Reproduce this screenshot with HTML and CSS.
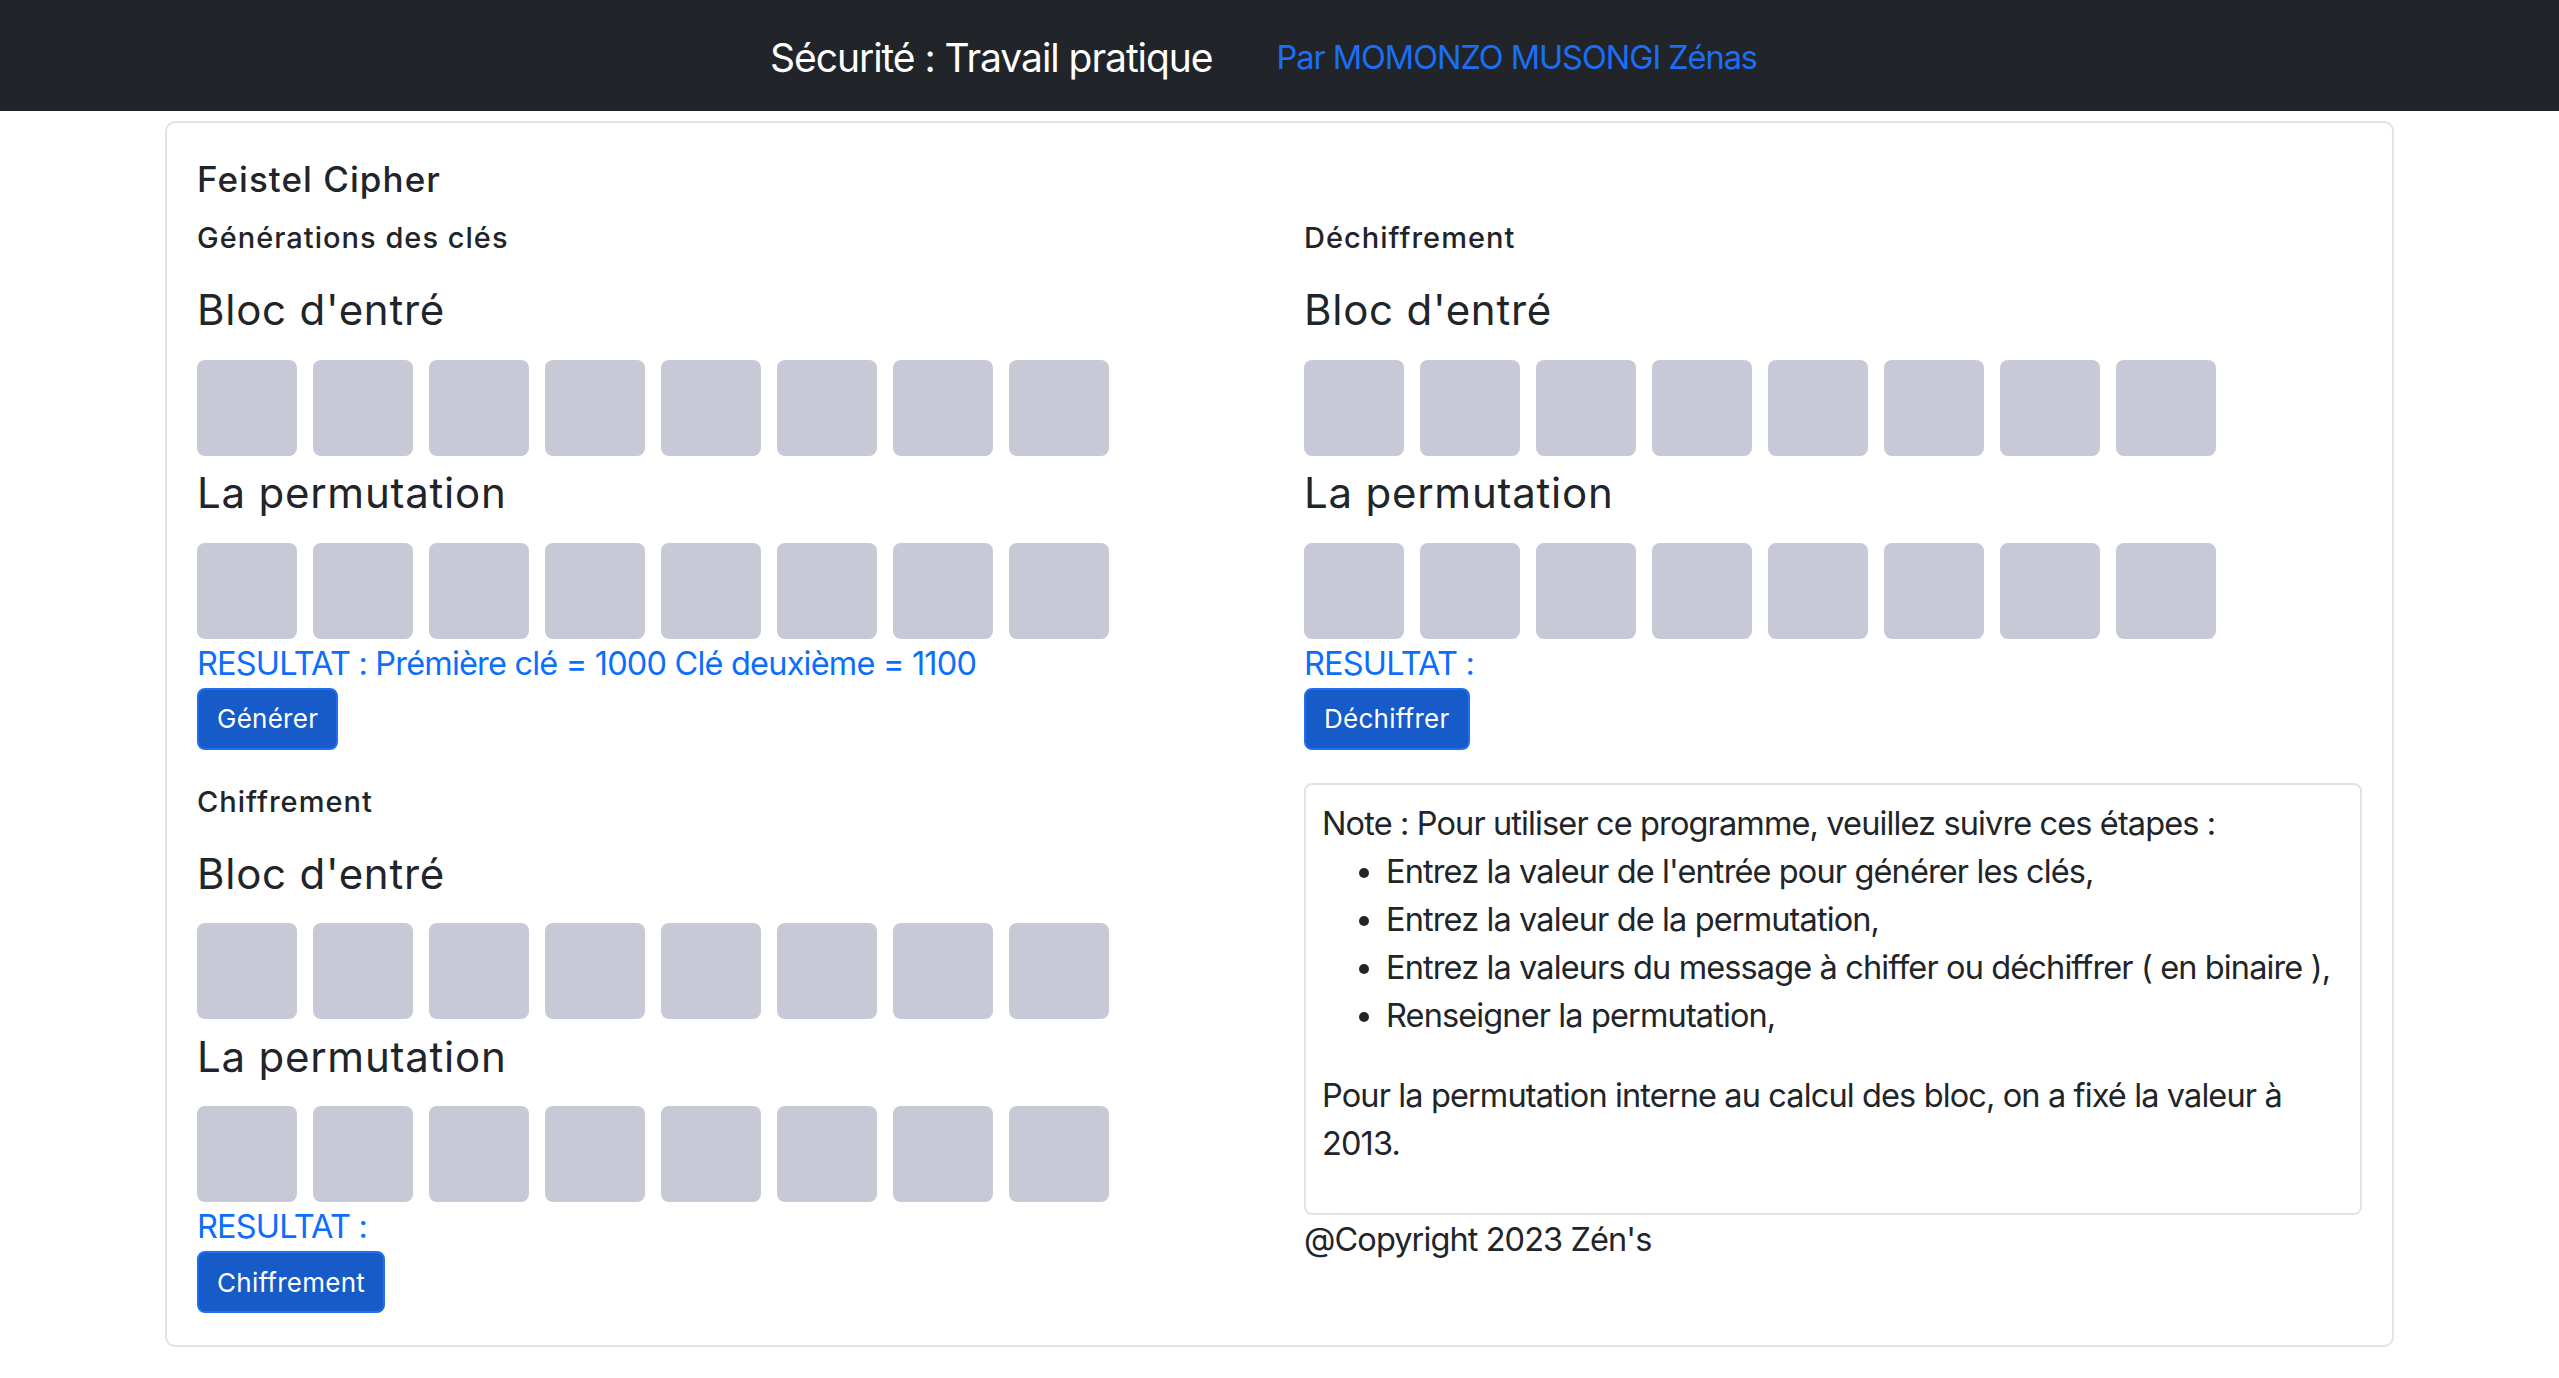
FILE: index.html
```html
<!DOCTYPE html>
<html lang="fr">
<head>
    <meta charset="UTF-8">
    <meta name="viewport" content="width=device-width, initial-scale=1.0">
    <title>Feistel Cipher</title>
    <link rel="stylesheet" href="styles.css">
</head>
<body>
    <nav class="topbar">
        <span class="topbar-title">Sécurité : Travail pratique</span>
        <a class="topbar-author" href="#">Par MOMONZO MUSONGI Zénas</a>
    </nav>

    <div class="card">
        <h5 class="card-title">Feistel Cipher</h5>
        <div class="columns">
            <div class="col">
                <div class="section">
                    <h6 class="section-title">Générations des clés</h6>
                    <h4 class="block-title">Bloc d'entré</h4>
                    <div class="cell-row">
                        <input class="cell" maxlength="1"><input class="cell" maxlength="1"><input class="cell" maxlength="1"><input class="cell" maxlength="1"><input class="cell" maxlength="1"><input class="cell" maxlength="1"><input class="cell" maxlength="1"><input class="cell" maxlength="1">
                    </div>
                    <h4 class="block-title">La permutation</h4>
                    <div class="cell-row">
                        <input class="cell" maxlength="1"><input class="cell" maxlength="1"><input class="cell" maxlength="1"><input class="cell" maxlength="1"><input class="cell" maxlength="1"><input class="cell" maxlength="1"><input class="cell" maxlength="1"><input class="cell" maxlength="1">
                    </div>
                    <p class="result">RESULTAT : Prémière clé = 1000 Clé deuxième = 1100</p>
                    <button class="btn">Générer</button>
                </div>

                <div class="section">
                    <h6 class="section-title">Chiffrement</h6>
                    <h4 class="block-title">Bloc d'entré</h4>
                    <div class="cell-row">
                        <input class="cell" maxlength="1"><input class="cell" maxlength="1"><input class="cell" maxlength="1"><input class="cell" maxlength="1"><input class="cell" maxlength="1"><input class="cell" maxlength="1"><input class="cell" maxlength="1"><input class="cell" maxlength="1">
                    </div>
                    <h4 class="block-title">La permutation</h4>
                    <div class="cell-row">
                        <input class="cell" maxlength="1"><input class="cell" maxlength="1"><input class="cell" maxlength="1"><input class="cell" maxlength="1"><input class="cell" maxlength="1"><input class="cell" maxlength="1"><input class="cell" maxlength="1"><input class="cell" maxlength="1">
                    </div>
                    <p class="result">RESULTAT :</p>
                    <button class="btn">Chiffrement</button>
                </div>
            </div>

            <div class="col">
                <div class="section">
                    <h6 class="section-title">Déchiffrement</h6>
                    <h4 class="block-title">Bloc d'entré</h4>
                    <div class="cell-row">
                        <input class="cell" maxlength="1"><input class="cell" maxlength="1"><input class="cell" maxlength="1"><input class="cell" maxlength="1"><input class="cell" maxlength="1"><input class="cell" maxlength="1"><input class="cell" maxlength="1"><input class="cell" maxlength="1">
                    </div>
                    <h4 class="block-title">La permutation</h4>
                    <div class="cell-row">
                        <input class="cell" maxlength="1"><input class="cell" maxlength="1"><input class="cell" maxlength="1"><input class="cell" maxlength="1"><input class="cell" maxlength="1"><input class="cell" maxlength="1"><input class="cell" maxlength="1"><input class="cell" maxlength="1">
                    </div>
                    <p class="result">RESULTAT :</p>
                    <button class="btn">Déchiffrer</button>
                </div>

                <div class="note">
                    Note : Pour utiliser ce programme, veuillez suivre ces étapes :
                    <ul>
                        <li>Entrez la valeur de l'entrée pour générer les clés,</li>
                        <li>Entrez la valeur de la permutation,</li>
                        <li>Entrez la valeurs du message à chiffer ou déchiffrer ( en binaire ),</li>
                        <li>Renseigner la permutation,</li>
                    </ul>
                    <p>Pour la permutation interne au calcul des bloc, on a fixé la valeur à 2013.</p>
                </div>
                <footer class="copyright">@Copyright 2023 Zén's</footer>
            </div>
        </div>
    </div>
</body>
</html>
```

FILE: styles.css
```css
body {
    margin: 0;
    font-family: Inter, "Noto Sans", sans-serif;
    font-size: 26px;
    line-height: 1.5;
    color: #212529;
    background-color: #fff;
}

.topbar {
    box-sizing: border-box;
    height: 111px;
    padding: 5px 32px 0 0;
    background-color: #212529;
    display: flex;
    align-items: center;
    justify-content: center;
    gap: 64px;
}

.topbar-title {
    color: #fff;
    font-size: 39px;
    letter-spacing: -0.027em;
}

.topbar-author {
    color: #1a6ff6;
    font-size: 32.5px;
    letter-spacing: -0.032em;
    text-decoration: none;
}

.card {
    box-sizing: border-box;
    width: 2229px;
    margin: 10px auto 0;
    padding: 37px 30px 32px;
    border: 2px solid #e2e3e5;
    border-radius: 10px;
}

.card-title {
    margin: 0 0 23px;
    font-size: 35px;
    font-weight: 500;
    line-height: 39px;
    letter-spacing: 0.03em;
}

.columns {
    display: grid;
    grid-template-columns: 1fr 1fr;
    column-gap: 49px;
}

.section + .section {
    margin-top: 36px;
}

.section-title {
    margin: 0 0 33px;
    font-size: 29px;
    font-weight: 500;
    line-height: 31px;
    letter-spacing: 0.035em;
}

.block-title {
    margin: 0 0 26.5px;
    font-size: 42px;
    font-weight: 400;
    line-height: 47px;
    letter-spacing: 0.018em;
}

.cell-row + .block-title {
    margin-top: 13.5px;
}

.cell-row {
    display: flex;
    gap: 16px;
}

.cell {
    width: 100px;
    height: 96px;
    padding: 0;
    border: none;
    border-radius: 8px;
    background-color: #c7c9d6;
    font: inherit;
    text-align: center;
}

.result {
    margin: 0;
    font-size: 32.5px;
    line-height: 49px;
    letter-spacing: -0.025em;
    color: #0d6efd;
}

.btn {
    display: block;
    padding: 9.5px 18px;
    font-family: inherit;
    font-size: 26px;
    line-height: 39px;
    letter-spacing: 0.01em;
    color: #fff;
    background-color: #165bc8;
    border: 2px solid #1f6ff5;
    border-radius: 8px;
    cursor: pointer;
}

.note {
    margin-top: 33px;
    padding: 15px 16px 19px;
    border: 2px solid #e2e3e5;
    border-radius: 8px;
    font-size: 32.5px;
    line-height: 48px;
    letter-spacing: -0.027em;
}

.note ul {
    margin: 0 0 32px;
    padding-left: 64px;
}

.note p {
    margin: 0 0 26px;
}

.copyright {
    font-size: 32.5px;
    line-height: 49px;
    letter-spacing: -0.028em;
}
```
